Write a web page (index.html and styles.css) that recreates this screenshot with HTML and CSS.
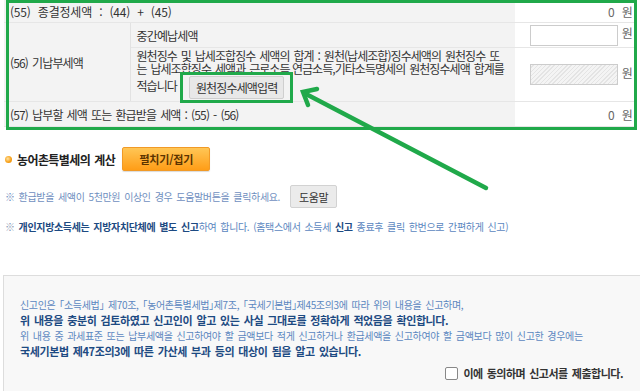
FILE: index.html
```html
<!DOCTYPE html>
<html lang="ko">
<head>
    <meta charset="UTF-8">
    <meta name="viewport" content="width=device-width, initial-scale=1.0">
    <title>세액의 계산</title>
    <link rel="stylesheet" href="styles.css">
</head>
<body>

<div class="page">
    <div class="tax-area">
        <table class="tax-table">
            <colgroup>
                <col class="col-label">
                <col class="col-sub">
                <col class="col-value">
            </colgroup>
            <tr class="row-55">
                <th colspan="2" class="label wide">(55) 종결정세액 : (44) + (45)</th>
                <td class="value">0 <span class="unit">원</span></td>
            </tr>
            <tr class="row-56a">
                <th rowspan="2" class="label label-side">(56) 기납부세액</th>
                <td class="sub">중간예납세액</td>
                <td class="value"><input type="text" class="amount"><span class="unit">원</span></td>
            </tr>
            <tr class="row-56b">
                <td class="sub desc">원천징수 및 납세조합징수 세액의 합계 : 원천(납세조합)징수세액의 원천징수 또<br>는 납세조합징수 세액과 근로소득,연금소득,기타소득명세의 원천징수세액 합계를<br>적습니다<span class="btn-mark"><button class="btn-gray">원천징수세액입력</button></span></td>
                <td class="value"><input type="text" class="amount locked" disabled><span class="unit">원</span></td>
            </tr>
            <tr class="row-57">
                <th colspan="2" class="label">(57) 납부할 세액 또는 환급받을 세액 : (55) - (56)</th>
                <td class="value">0 <span class="unit">원</span></td>
            </tr>
        </table>
        <div class="mark-box"></div>
    </div>

    <div class="section-title">
        <span class="bullet"></span>
        <span class="title-text">농어촌특별세의 계산</span>
        <button class="btn-toggle">펼치기/접기</button>
    </div>

    <div class="hint">
        <span>※ 환급받을 세액이 5천만원 이상인 경우 도움말버튼을 클릭하세요.</span>
        <button class="btn-help">도움말</button>
    </div>

    <p class="hint-local"><span class="mark">※</span> <b>개인지방소득세는 지방자치단체에 별도 신고</b>하여 합니다. (홈택스에서 소득세 <b>신고</b> 종료후 클릭 한번으로 간편하게 신고)</p>

    <div class="notice">
        <p class="plain">신고인은 「소득세법」 제70조, 「농어촌특별세법」제7조, 「국세기본법」제45조의3에 따라 위의 내용을 신고하며,</p>
        <p class="strong">위 내용을 충분히 검토하였고 신고인이 알고 있는 사실 그대로를 정확하게 적었음을 확인합니다.</p>
        <p class="plain">위 내용 중 과세표준 또는 납부세액을 신고하여야 할 금액보다 적게 신고하거나 환급세액을 신고하여야 할 금액보다 많이 신고한 경우에는</p>
        <p class="strong">국세기본법 제47조의3에 따른 가산세 부과 등의 대상이 됨을 알고 있습니다.</p>
        <label class="agree"><input type="checkbox" class="agree-check">이에 동의하며 신고서를 제출합니다.</label>
    </div>

    <!-- 안내용 화살표 -->
    <svg class="mark-arrow" width="640" height="200" viewBox="0 0 640 200">
        <line x1="306" y1="94" x2="486" y2="188" stroke="#20a94a" stroke-width="4.5" stroke-linecap="round"/>
        <polyline points="317,89 303,92 308,105" fill="none" stroke="#20a94a" stroke-width="4.5" stroke-linecap="round"/>
    </svg>
</div>

</body>
</html>
```

FILE: styles.css
```css
body {
    margin: 0;
    font-family: "Noto Sans CJK KR", "Noto Sans", sans-serif;
    font-size: 12px;
    color: #333;
    letter-spacing: -0.6px;
    word-spacing: 1.5px;
    background-color: #fff;
    overflow: hidden;
}
.page {
    position: relative;
    height: 391px;
}
.tax-area {
    position: relative;
    height: 130px;
}
.tax-table {
    margin-left: 4px;
    width: 632px;
    border-collapse: collapse;
    table-layout: fixed;
    letter-spacing: -0.85px;
}
.col-label {
    width: 126px;
}
.col-value {
    width: 121px;
}
.tax-table th, .tax-table td {
    padding: 0 6px;
    font-weight: normal;
    text-align: left;
    line-height: 13px;
    white-space: nowrap;
    border-bottom: 1px solid #e6e6e6;
}
.tax-table .label, .tax-table .sub {
    background-color: #f3f3f3;
}
.tax-table .wide {
    letter-spacing: -0.2px;
    word-spacing: 4px;
}
.tax-table .label-side {
    border-right: 1px solid #e2e2e2;
}
.tax-table .value {
    text-align: right;
    padding-right: 4px;
    background-color: #fff;
    color: #666;
}
.row-55 th, .row-55 td {
    height: 22px;
}
.row-56a th, .row-56a td {
    height: 24px;
}
.row-56b td {
    height: 53px;
}
.row-57 th, .row-57 td {
    height: 24px;
}
.tax-table .desc {
    line-height: 13px;
    letter-spacing: -0.95px;
    color: #333;
}
.unit {
    margin-left: 4px;
}
.amount {
    box-sizing: border-box;
    width: 88px;
    height: 21px;
    margin: 0;
    padding: 0 4px;
    border: 1px solid #ccc;
    background-color: #fff;
    vertical-align: middle;
}
.amount.locked {
    background: repeating-linear-gradient(-45deg, #e4e4e4 0 1px, #f4f4f4 1px 3px);
}
.btn-mark {
    display: inline-block;
    margin: -3px 0 -3px 3px;
    padding: 1px 6px;
    border: 3px solid #20a94a;
    vertical-align: middle;
}
.btn-gray {
    display: block;
    height: 23px;
    padding: 0 6px;
    font: inherit;
    letter-spacing: -0.85px;
    color: #333;
    background-color: #e8e8e8;
    border: 1px solid #cfcfcf;
    border-radius: 2px;
}
.mark-box {
    position: absolute;
    left: 6px;
    top: 0;
    width: 625px;
    height: 124px;
    border: 3px solid #20a94a;
}
.section-title {
    display: flex;
    align-items: center;
    height: 24px;
    margin: 17px 0 0 5px;
}
.bullet {
    width: 7px;
    height: 7px;
    border-radius: 50%;
    background: radial-gradient(circle at 40% 40%, #ffe3a6 0, #f7a21b 55%, #e98600 100%);
}
.title-text {
    margin-left: 5px;
    font-weight: bold;
    color: #222;
}
.btn-toggle {
    width: 88px;
    height: 24px;
    margin-left: 7px;
    padding: 0;
    font: inherit;
    font-size: 11px;
    font-weight: bold;
    letter-spacing: -0.2px;
    color: #5b3400;
    background: linear-gradient(#ffc656, #ff9d17);
    border: 1px solid #f19a26;
    border-radius: 2px;
    box-shadow: 0 1px 1px rgba(0, 0, 0, 0.15);
}
.hint {
    display: flex;
    align-items: center;
    height: 23px;
    margin: 14px 0 0 5px;
    font-size: 10px;
    letter-spacing: -0.35px;
    color: #6f8fc0;
}
.btn-help {
    width: 47px;
    height: 23px;
    margin-left: 10px;
    padding: 0;
    font: inherit;
    font-size: 11px;
    letter-spacing: inherit;
    color: #333;
    background-color: #ebebeb;
    border: 1px solid #d2d2d2;
    border-radius: 2px;
}
.hint-local {
    margin: 11px 0 0 5px;
    font-size: 10px;
    line-height: 16px;
    letter-spacing: -0.35px;
    color: #5b87c0;
}
.hint-local .mark {
    color: #8a9bb5;
}
.hint-local b {
    color: #1d4a82;
}
.notice {
    height: 200px;
    margin: 40px 0 0 3px;
    padding: 21px 17px 0 16px;
    background-color: #f8f8f8;
    border-top: 1px solid #ddd;
    border-left: 1px solid #ddd;
}
.notice p {
    margin: 0;
    line-height: 15.6px;
}
.notice .plain {
    font-size: 10px;
    letter-spacing: -0.35px;
    font-feature-settings: "halt";
    color: #5b87c0;
}
.notice .strong {
    font-size: 11px;
    font-weight: bold;
    letter-spacing: -0.4px;
    color: #1d4a82;
}
.agree {
    display: flex;
    justify-content: flex-end;
    align-items: center;
    margin-top: 6px;
    line-height: 16px;
    font-size: 11px;
    font-weight: bold;
    letter-spacing: -0.5px;
    color: #333;
}
.agree-check {
    appearance: none;
    width: 13px;
    height: 13px;
    margin: 0 5px 0 0;
    background-color: #fff;
    border: 1px solid #888;
    border-radius: 2px;
}
.mark-arrow {
    position: absolute;
    left: 0;
    top: 0;
    pointer-events: none;
}
```
